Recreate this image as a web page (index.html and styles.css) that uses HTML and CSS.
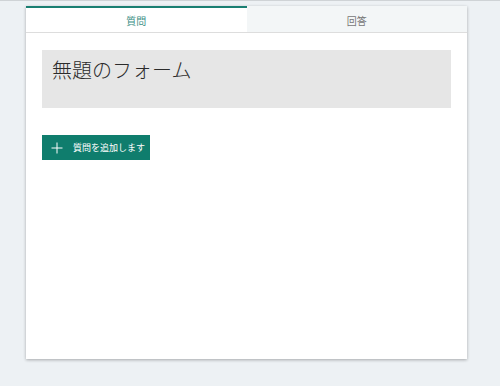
FILE: index.html
```
<html>
<head>
    <title>無題のフォーム</title>
    <link rel="stylesheet" href="styles.css">
</head>
<body>
    <div class="page">
        <div class="card">
            <div class="tabs">
                <div class="tab active">質問</div>
                <div class="tab">回答</div>
            </div>
            <div class="content">
                <div class="title-box">
                    <div class="title">無題のフォーム</div>
                </div>
                <div class="add-row">
                    <button class="add-button">
                        <svg width="12" height="12" viewBox="0 0 12 12">
                            <path d="M6 0.5V11.5M0.5 6H11.5" stroke="#ffffff" stroke-width="1" fill="none"/>
                        </svg>
                        <span>質問を追加します</span>
                    </button>
                </div>
            </div>
        </div>
    </div>
</body>
</html>
```

FILE: styles.css
```
body {
    margin: 0;
    background-color: #edf1f4;
    font-family: "Noto Sans CJK JP", "Noto Sans", sans-serif;
    color: #333333;
    border-top: 1px solid #cfd3d6;
}
.page {
    padding: 5px 0 0 26px;
}
.card {
    width: 441px;
    height: 353px;
    background-color: #ffffff;
    box-shadow: 0 1px 3px rgba(0, 0, 0, 0.3);
    display: flex;
    flex-direction: column;
}
.tabs {
    display: flex;
    height: 26px;
    border-bottom: 1px solid #dddddd;
}
.tab {
    flex: 1;
    display: flex;
    justify-content: center;
    align-items: center;
    font-size: 10px;
    color: #777777;
    background-color: #f3f6f7;
    border-top: 2px solid transparent;
}
.tab.active {
    background-color: #ffffff;
    color: #3c8f86;
    border-top: 2px solid #1a7f72;
}
.content {
    padding: 17px 16px 0 16px;
}
.title-box {
    background-color: #e6e6e6;
    height: 58px;
    padding: 7px 10px 0 10px;
    box-sizing: border-box;
}
.title {
    font-size: 20px;
    font-weight: 300;
    color: #2b2b2b;
    line-height: 26px;
}
.add-row {
    padding-top: 27px;
}
.add-button {
    display: flex;
    align-items: center;
    gap: 10px;
    background-color: #0f7d6d;
    border: 0;
    height: 25px;
    width: 108px;
    padding: 0 0 0 9px;
    color: #ffffff;
    font-family: "Noto Sans CJK JP", sans-serif;
    font-size: 9px;
}
```
